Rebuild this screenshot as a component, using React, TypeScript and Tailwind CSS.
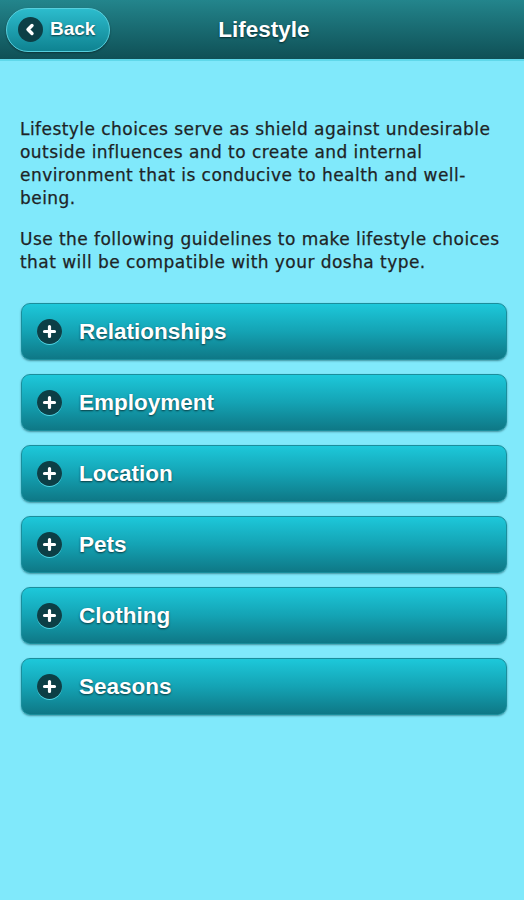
const items = ["Relationships", "Employment", "Location", "Pets", "Clothing", "Seasons"];

const PlusIcon = () => (
    <div className="flex items-center justify-center w-[25px] h-[25px] rounded-full bg-[#0c3f46] shadow-[0_1px_0_#4fd3e2]">
        <svg width="15" height="15" viewBox="0 0 15 15">
            <path d="M7.5 2.5v10M2.5 7.5h10" stroke="#fff" strokeWidth="3.2" strokeLinecap="round" />
        </svg>
    </div>
);

const Item = ({ label }: { label: string }) => (
    <div className="flex items-center gap-[17px] h-[57px] px-[15px] rounded-[9px] border border-[#1a8e9c] bg-gradient-to-b from-[#1dc8da] via-[#14a3b4] to-[#0e7886] shadow-[0_1px_2px_rgba(0,60,70,0.5)]">
        <PlusIcon />
        <span className="text-[22.5px] font-bold text-white [text-shadow:0_1px_2px_#0a3a40]">{label}</span>
    </div>
);

export default function App() {
    return (
        <div className="min-h-[900px] w-[524px] bg-[#80e9fb] font-['Liberation_Sans',Arial,sans-serif]">
            <div className="relative flex items-center h-[61px] px-[6px] bg-gradient-to-b from-[#23858c] to-[#0f5056] border-b-[2px] border-[#5fd8ea]">
                <div className="flex items-center gap-[7px] h-[44px] w-[104px] pl-[11px] rounded-full border border-[#56cfdd] bg-gradient-to-b from-[#2cbccd] to-[#0e8391] shadow-[0_1px_2px_rgba(0,0,0,0.4)]">
                    <div className="flex items-center justify-center w-[25px] h-[25px] rounded-full bg-[#0c3f46]">
                        <svg width="13" height="13" viewBox="0 0 13 13">
                            <path d="M8 2.5L4 6.5l4 4" stroke="#fff" strokeWidth="3.4" fill="none" strokeLinecap="round" strokeLinejoin="round" />
                        </svg>
                    </div>
                    <span className="text-[19px] font-bold text-white [text-shadow:0_1px_2px_#0a3a40]">Back</span>
                </div>
                <div className="absolute left-[4px] right-0 text-center pointer-events-none">
                    <span className="text-[22.5px] font-bold text-white [text-shadow:0_1px_2px_#062a2e]">Lifestyle</span>
                </div>
            </div>
            <div className="pl-[20px] pr-[14px] pt-[57px] font-['DejaVu_Sans',Verdana,sans-serif] text-[17px] leading-[23px] tracking-[0.45px] text-[#1e2426] [-webkit-text-stroke:0.25px_#1e2426]">
                <p>Lifestyle choices serve as shield against undesirable outside influences and to create and internal environment that is conducive to health and well-being.</p>
                <p className="mt-[18px]">Use the following guidelines to make lifestyle choices that will be compatible with your dosha type.</p>
            </div>
            <div className="flex flex-col gap-[14px] pl-[21px] pr-[17px] pt-[29px]">
                {items.map((label) => (
                    <Item key={label} label={label} />
                ))}
            </div>
        </div>
    );
}
